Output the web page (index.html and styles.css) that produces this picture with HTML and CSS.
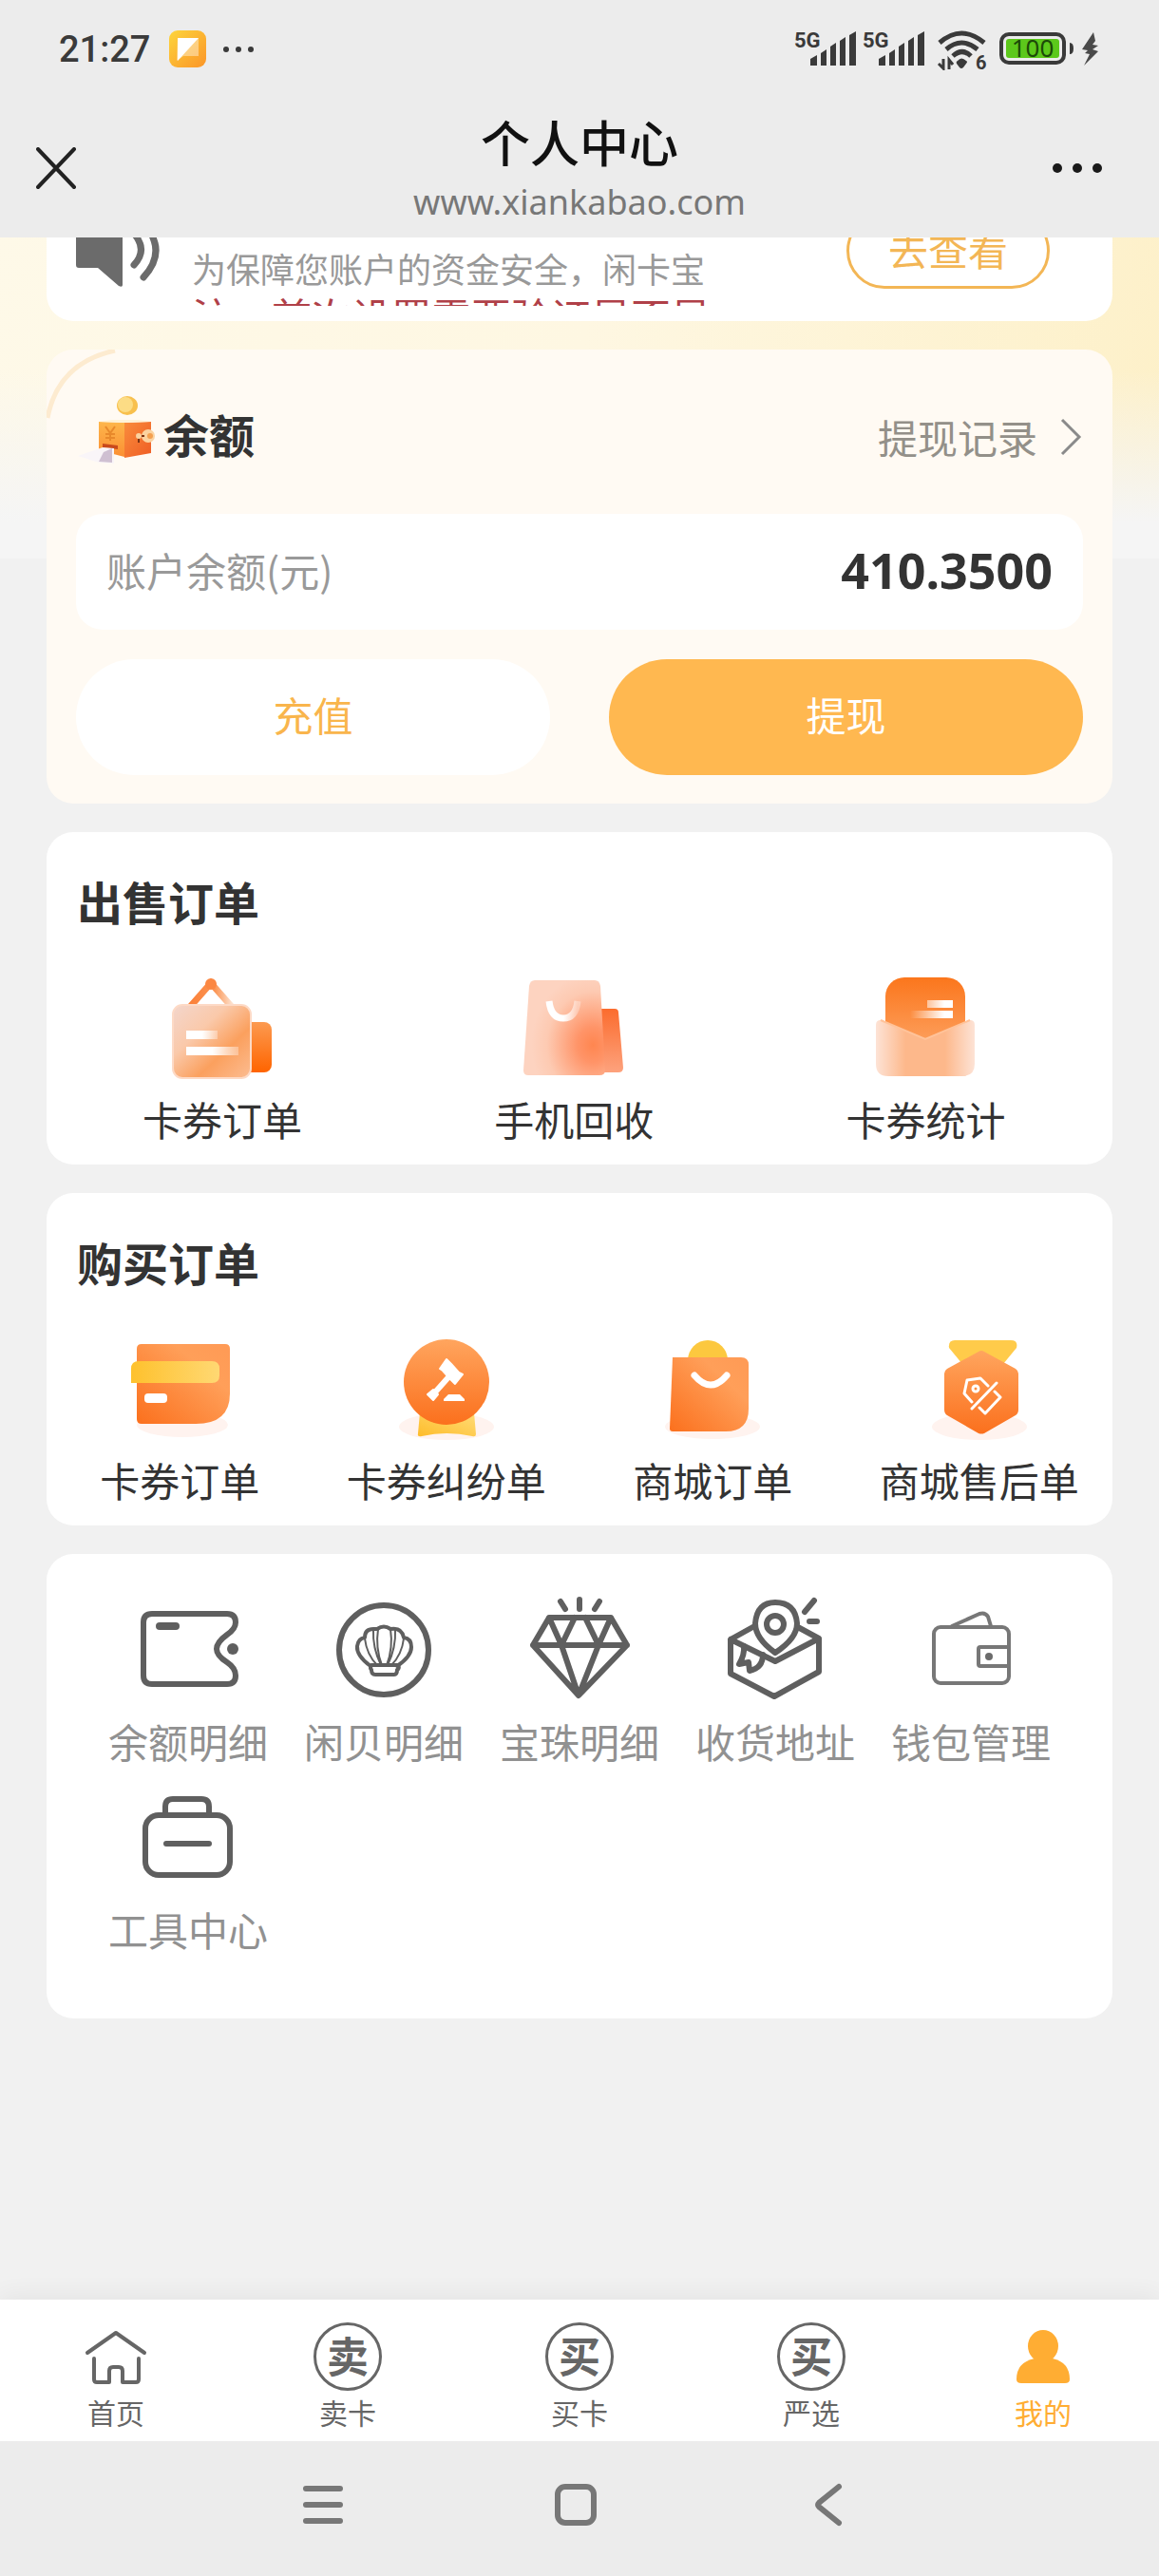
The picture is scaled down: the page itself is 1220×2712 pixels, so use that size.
FILE: index.html
```html
<!DOCTYPE html>
<html lang="zh-CN">
<head>
<meta charset="utf-8">
<meta name="viewport" content="width=device-width, initial-scale=1">
<title>个人中心</title>
<link rel="stylesheet" href="styles.css">
</head>
<body>
<header class="top">
  <div class="status">
    <div class="status-side">
      <span class="clock">21:27</span>
      <svg class="app-badge" width="40" height="40" viewBox="0 0 40 40">
        <defs><linearGradient id="badge" x1="0" y1="0" x2="1" y2="1"><stop offset="0" stop-color="#fdd53c"/><stop offset="1" stop-color="#fb9528"/></linearGradient></defs>
        <rect width="39" height="39" rx="9" fill="url(#badge)"/>
        <path d="M9 8h22v19H15l-7 5z" fill="#fff" opacity=".4"/>
        <path d="M9 8h22L9 32z" fill="#fff"/>
      </svg>
      <svg width="34" height="10" viewBox="0 0 34 10" fill="#3a3a3a"><circle cx="4" cy="5" r="3"/><circle cx="17" cy="5" r="3"/><circle cx="30" cy="5" r="3"/></svg>
    </div>
    <div class="status-side">
      <svg width="324" height="44" viewBox="0 0 324 44">
        <g fill="#3a3a3a">
          <text class="net" x="0" y="20">5G</text>
          <text class="net" x="72" y="20">5G</text>
          <path d="M17 32l7-4v11h-7zM28 26l6-4v17h-6zM38 19l6-4v24h-6zM48 13l6-4v30h-6zM58 7l7-4v36h-7z"/>
          <path d="M89 32l7-4v11h-7zM100 26l6-4v17h-6zM110 19l6-4v24h-6zM120 13l6-4v30h-6zM130 7l7-4v36h-7z"/>
          <path d="M172 34q4-5 9 0 2 1 0 3l-3 4q-2 2-4 0l-3-4q-1-2 1-3z"/>
          <text class="wifi-gen" x="191" y="43">6</text>
        </g>
        <g fill="none" stroke="#3a3a3a" stroke-width="5">
          <path d="M153 15q23-20 47 0"/><path d="M160 22q16-14 33 0"/><path d="M167 29q10-9 19 0"/>
          <path d="M157 32v10l-5-5M163 43V33l4 5" stroke-width="3"/>
          <rect x="218" y="6" width="66" height="30" rx="8" stroke-width="4"/>
        </g>
        <rect x="223" y="11" width="56" height="20" rx="3" fill="#5cc81b"/>
        <path d="M290 15q4 0 4 6t-4 6z" fill="#3a3a3a"/>
        <text class="level" x="251" y="30" text-anchor="middle">100</text>
        <path d="M315 4l-12 18 6 1-3 3 5 1-6 12 15-15-6-2 6-4-6-1 3-4z" fill="#4a4a4a"/>
      </svg>
    </div>
  </div>
  <div class="titlebar">
    <button class="icon-btn" aria-label="关闭"><svg width="44" height="44" viewBox="0 0 44 44"><path d="M2 2l38 40M40 2L2 42" stroke="#222" stroke-width="4" stroke-linecap="round"/></svg></button>
    <div class="titles">
      <h1>个人中心</h1>
      <p>www.xiankabao.com</p>
    </div>
    <button class="icon-btn end" aria-label="更多"><svg width="56" height="44" viewBox="0 0 56 44" fill="#1a1a1a"><circle cx="7" cy="22" r="5"/><circle cx="28" cy="22" r="5"/><circle cx="49" cy="22" r="5"/></svg></button>
  </div>
</header>

<main class="page">
  <section class="card notice">
    <svg width="90" height="80" viewBox="0 0 90 80">
      <path d="M0 24q0-3 3-3h20L46 2q3-2 3 2v72q0 3-4 1L23 58H3q-3 0-3-3z" fill="#6b6b6b"/>
      <g fill="none" stroke="#6b6b6b" stroke-width="7" stroke-linecap="round"><path d="M61 22q15 17 0 33"/><path d="M71 11q26 29 0 57"/></g>
    </svg>
    <div class="notice-text"><p>为保障您账户的资金安全，闲卡宝</p><p class="warn">注：首次设置需要验证是否是</p></div>
    <button class="check">去查看</button>
  </section>

  <section class="card balance">
    <svg class="corner" width="84" height="84" viewBox="0 0 84 84"><path d="M1 72Q12 14 72 1" fill="none" stroke="#fdebd0" stroke-width="5"/></svg>
    <div class="balance-head">
      <svg width="90" height="100" viewBox="0 0 90 100">
        <defs>
          <linearGradient id="boxl" x1="0" y1="0" x2="0" y2="1"><stop offset="0" stop-color="#fdb64b"/><stop offset="1" stop-color="#fb8f33"/></linearGradient>
          <linearGradient id="boxr" x1="0" y1="0" x2="1" y2="1"><stop offset="0" stop-color="#f98c3c"/><stop offset="1" stop-color="#ef5d24"/></linearGradient>
        </defs>
        <ellipse cx="54" cy="17" rx="11" ry="10" fill="#f8c04e"/><ellipse cx="52" cy="16" rx="8" ry="8" fill="#fcdc85"/>
        <path d="M24 34l27 1v36l-27-7z" fill="url(#boxl)"/>
        <path d="M51 35l28-1v33l-28 5z" fill="url(#boxr)"/>
        <path d="M24 34l27 1 28-1-14-2H38z" fill="#fff3d8"/>
        <path d="M31 39l5 7 5-7M31 47h10M31 51h10M36 46v8" fill="none" stroke="#e8892b" stroke-width="2"/>
        <path d="M28 57l16 2v4l-16-2z" fill="#c94a1c"/>
        <path d="M2 70l26-9 12 1v16l-16-1z" fill="#f9f5f8"/><path d="M29 66l9-4v15l-14-1z" fill="#cfc0d2"/>
        <circle cx="76" cy="49" r="7" fill="#fbd3a0"/><circle cx="78" cy="49" r="3" fill="#f4a04f"/><path d="M63 49h9M66 49v7" stroke="#7d3413" stroke-width="2"/><circle cx="66" cy="49" r="3" fill="#fbd3a0"/>
      </svg>
      <h2>余额</h2>
      <a class="records" href="#records">提现记录<svg width="24" height="40" viewBox="0 0 24 40"><path d="M2 2l18 18L2 38" fill="none" stroke="#8a8a8a" stroke-width="3"/></svg></a>
    </div>
    <div class="amount"><span>账户余额(元)</span><strong>410.3500</strong></div>
    <div class="actions"><button class="pill">充值</button><button class="pill primary">提现</button></div>
  </section>

  <section class="card orders">
    <h2>出售订单</h2>
    <div class="row three">
      <a href="#sell-cards">
        <svg class="ico" viewBox="0 0 120 120">
          <defs>
            <linearGradient id="o1" x1="0" y1="0" x2="0" y2="1"><stop offset="0" stop-color="#fc9a50"/><stop offset="1" stop-color="#ff6400"/></linearGradient>
            <linearGradient id="o2" x1="0" y1="0" x2="1" y2="1"><stop offset="0" stop-color="#f3d6cc"/><stop offset=".35" stop-color="#fac9aa"/><stop offset=".65" stop-color="#fba05e"/><stop offset="1" stop-color="#fcbd92"/></linearGradient>
            <linearGradient id="fade"><stop offset="0" stop-color="#fff"/><stop offset=".5" stop-color="#fff"/><stop offset="1" stop-color="#fff" stop-opacity=".3"/></linearGradient>
            <linearGradient id="hook"><stop offset="0" stop-color="#fb8038"/><stop offset=".6" stop-color="#fb9554"/><stop offset="1" stop-color="#fde0cc"/></linearGradient>
          </defs>
          <path d="M26 38L48 13 70 38" fill="none" stroke="url(#hook)" stroke-width="7"/><circle cx="48" cy="14" r="6" fill="#fb8742"/>
          <rect x="72" y="54" width="40" height="53" rx="8" fill="url(#o1)"/>
          <rect x="8" y="36" width="82" height="77" rx="10" fill="url(#o2)" stroke="#fddac6" stroke-width="2"/>
          <path d="M22 63h33v9H22z" fill="url(#fade)"/><path d="M22 80h55v9H22z" fill="url(#fade)"/>
        </svg>
        <span>卡券订单</span>
      </a>
      <a href="#recycle">
        <svg class="ico" viewBox="0 0 120 120">
          <defs>
            <linearGradient id="p1" x1="0" y1="0" x2="0" y2="1"><stop offset="0" stop-color="#fb6c2e"/><stop offset="1" stop-color="#fda27d"/></linearGradient>
            <radialGradient id="p2" cx=".85" cy=".68" r=".75"><stop offset="0" stop-color="#ff8650"/><stop offset=".25" stop-color="#ff9468"/><stop offset=".75" stop-color="#fdcab2"/><stop offset="1" stop-color="#fdd3c0"/></radialGradient>
          </defs>
          <path d="M84 40h19q4 0 4 4l5 58q0 5-5 5H84z" fill="url(#p1)"/>
          <path d="M19 10h63q5 0 6 6l5 89q0 5-6 5H12q-5 0-5-5l6-89q1-6 6-6z" fill="url(#p2)"/>
          <path d="M34 32q2 18 15 18t15-18" fill="none" stroke="url(#fade)" stroke-width="7"/>
        </svg>
        <span>手机回收</span>
      </a>
      <a href="#stats">
        <svg class="ico" viewBox="0 0 120 120">
          <defs>
            <linearGradient id="q1" x1="0" y1="0" x2="0" y2="1"><stop offset="0" stop-color="#fb761c"/><stop offset="1" stop-color="#fda566"/></linearGradient>
            <linearGradient id="q2"><stop offset="0" stop-color="#fde3d6"/><stop offset=".3" stop-color="#fdb88b"/><stop offset=".7" stop-color="#fdb88b"/><stop offset="1" stop-color="#fde3d6"/></linearGradient>
            <linearGradient id="q3"><stop offset="0" stop-color="#fff" stop-opacity="0"/><stop offset=".8" stop-color="#fff"/></linearGradient>
          </defs>
          <rect x="17" y="7" width="84" height="80" rx="20" fill="url(#q1)"/>
          <path d="M61 31h27v8H61zM43 42h45v8H43z" fill="url(#q3)"/>
          <path d="M7 57q0-5 5-5l47 20 47-20q5 0 5 5v41q0 13-13 13H20Q7 111 7 98z" fill="url(#q2)"/>
          <path d="M12 52l47 20 47-20" fill="none" stroke="#ffc39a" stroke-width="2"/>
        </svg>
        <span>卡券统计</span>
      </a>
    </div>
  </section>

  <section class="card orders">
    <h2>购买订单</h2>
    <div class="row four">
      <a href="#buy-cards">
        <svg class="ico" viewBox="0 0 120 120">
          <defs>
            <linearGradient id="r1" x1="0" y1="1" x2="1" y2="0"><stop offset="0" stop-color="#fb701d"/><stop offset=".7" stop-color="#ff9f59"/><stop offset="1" stop-color="#ff9a55"/></linearGradient>
            <linearGradient id="r2"><stop offset="0" stop-color="#fec12d"/><stop offset="1" stop-color="#ffd873"/></linearGradient>
          </defs>
          <ellipse cx="63" cy="98" rx="48" ry="13" fill="#fff3ef"/>
          <path d="M20 13h88q5 0 5 5v47q0 32-36 32H20q-5 0-5-5V18q0-5 5-5z" fill="url(#r1)"/>
          <path d="M17 31h77q8 0 8 8v7q0 8-8 8H9V39q0-8 8-8z" fill="url(#r2)"/>
          <rect x="23" y="65" width="24" height="10" rx="4" fill="#fff"/>
        </svg>
        <span>卡券订单</span>
      </a>
      <a href="#disputes">
        <svg class="ico" viewBox="0 0 120 120">
          <defs>
            <linearGradient id="s1" x1="0" y1="0" x2="0" y2="1"><stop offset="0" stop-color="#ffa55e"/><stop offset="1" stop-color="#fb701d"/></linearGradient>
            <linearGradient id="s2" x1="0" y1="1" x2="1" y2="0"><stop offset="0" stop-color="#febc2a"/><stop offset="1" stop-color="#ffdc78"/></linearGradient>
          </defs>
          <ellipse cx="60" cy="100" rx="50" ry="14" fill="#fff3ef"/>
          <path d="M32 85h57l2 23q0 3-4 2-27-6-53 0-5 1-4-3z" fill="url(#s2)"/>
          <circle cx="60" cy="53" r="45" fill="url(#s1)"/>
          <g fill="#fff" stroke="#fff" stroke-linejoin="round">
            <path d="M62 48L46 66" stroke-width="6"/>
            <path d="M60 29l5 5 8 9 4 2-8 10-5-5-8-9-3-2z" stroke-width="2"/>
            <path d="M46 61l5 5-5 6-6-6z" stroke-width="2"/>
            <path d="M62 66h12l5 5v2H57v-2z" stroke="none"/>
          </g>
        </svg>
        <span>卡券纠纷单</span>
      </a>
      <a href="#mall">
        <svg class="ico" viewBox="0 0 120 120">
          <ellipse cx="60" cy="100" rx="50" ry="13" fill="#fff3ef"/>
          <circle cx="55" cy="30" r="21" fill="#fcc83f"/>
          <path d="M18 27h72q8 0 8 8v46q0 24-24 24H18q-3 0-3-3z" fill="url(#r1)"/>
          <path d="M41 46q17 20 34 0" fill="none" stroke="#fff" stroke-width="7" stroke-linecap="round"/>
        </svg>
        <span>商城订单</span>
      </a>
      <a href="#after-sale">
        <svg class="ico" viewBox="0 0 120 120">
          <ellipse cx="60" cy="100" rx="50" ry="14" fill="#fff3ef"/>
          <path d="M34 9h59q8 0 6 8L85 34 62 48 42 34 28 17q-1-8 6-8z" fill="#ffcb4a"/>
          <path d="M59 21q3-2 6 0l33 18q3 2 3 5v38q0 4-3 6l-33 19q-3 1-6 0L26 88q-3-2-3-6V44q0-3 3-5z" fill="url(#s1)"/>
          <g fill="none" stroke="#fff" stroke-width="3" stroke-linecap="round" stroke-linejoin="round"><path d="M69 57l-8-8-14 2-3 14 8 9M52 81l26-27M76 63l6 6-16 17-6-6"/><circle cx="56" cy="60" r="3"/></g>
        </svg>
        <span>商城售后单</span>
      </a>
    </div>
  </section>

  <section class="card tools">
    <a href="#balance-log">
      <svg class="ico line" viewBox="0 0 120 120"><path d="M101 44Q110 38 110 31 110 22 101 22H22q-9 0-9 9v56q0 9 9 9h79q9 0 9-9 0-8-9-14Q90 66 90 59t11-15z"/><circle cx="107" cy="59" r="6" fill="#5f5f5f" stroke="none"/><path d="M30 35h17" stroke-width="8"/></svg>
      <span>余额明细</span>
    </a>
    <a href="#shell-log">
      <svg class="ico line" viewBox="0 0 120 120"><circle cx="60" cy="60" r="47"/><path d="M46 77Q31 66 32 56q1-8 8-9 0-9 9-9 3 0 4 0 7-5 14 0 12-2 14 9 8 1 8 10 0 10-15 20" stroke-width="4"/><path d="M47 76h28q2 3-1 5 0 5-3 5H51q-4 0-4-5-2-2 0-5z" stroke-width="4"/><path d="M40 48q2 17 13 28M49 38q-1 20 8 38M54 38q-3 20 4 38M67 38q3 20-4 38M72 38q1 20-8 38M81 48q-2 17-13 28" stroke-width="2"/></svg>
      <span>闲贝明细</span>
    </a>
    <a href="#pearl-log">
      <svg class="ico line" viewBox="0 0 120 120"><path d="M28 26h65l17 29-51 53-48-53zM11 55h99M28 26l13 29 18 53 21-53 13-29M41 55l14-29M80 55L66 26M60 7v10M40 9l5 8M81 9l-5 8"/></svg>
      <span>宝珠明细</span>
    </a>
    <a href="#address">
      <svg class="ico line" viewBox="0 0 120 120"><path d="M40 34L13 49v36l46 24 47-26V48L82 35M13 49l47 23 46-24"/><path d="M60 63Q39 48 39 32 41 10 60 10q21 0 23 22 0 16-23 31z" fill="#fff"/><circle cx="60" cy="33" r="9"/><path d="M91 20l10-12M96 30h8M27 56q1 9-5 19l10-2 1 9q14-3 14-17"/></svg>
      <span>收货地址</span>
    </a>
    <a href="#wallet">
      <svg class="ico line thin" viewBox="0 0 120 120"><rect x="21" y="36" width="79" height="59" rx="7"/><path d="M40 35l29-13q6-2 9 3l3 10M99 57H70q-2 0-2 2v16q0 2 2 2h29"/><circle cx="79" cy="67" r="4" fill="#6b6b6b" stroke="none"/></svg>
      <span>钱包管理</span>
    </a>
    <a href="#toolbox">
      <svg class="ico line" viewBox="0 0 120 120"><rect x="15" y="36" width="89" height="63" rx="14"/><path d="M36 36V27q0-8 8-8h30q8 0 8 8v9M37 66h45"/></svg>
      <span>工具中心</span>
    </a>
  </section>
</main>

<nav class="tabs">
  <a href="#home"><svg class="tab-ico" viewBox="0 0 72 72" fill="none" stroke="#666" stroke-width="4" stroke-linecap="round" stroke-linejoin="round"><path d="M6 32L36 11 66 32M13 38v22q0 3 3 3h13V51q0-4 4-4h6q4 0 4 4v12h14q3 0 3-3V38"/></svg><span>首页</span></a>
  <a href="#sell"><b class="tab-ico ring">卖</b><span>卖卡</span></a>
  <a href="#buy"><b class="tab-ico ring">买</b><span>买卡</span></a>
  <a href="#select"><b class="tab-ico ring">买</b><span>严选</span></a>
  <a class="active" href="#me"><svg class="tab-ico" viewBox="0 0 72 72" fill="#ffad33"><ellipse cx="36" cy="25" rx="16" ry="17"/><path d="M27 38q-19 4-19 22 0 4 5 4h46q5 0 5-4 0-18-18-22z"/></svg><span>我的</span></a>
</nav>
<footer class="sysnav">
  <button aria-label="最近任务"><svg width="44" height="44" viewBox="0 0 44 44"><path d="M4 5h36M4 22h36M4 39h36"/></svg></button>
  <button aria-label="主屏幕"><svg width="48" height="48" viewBox="0 0 48 48"><rect x="5" y="5" width="38" height="38" rx="8"/></svg></button>
  <button aria-label="返回"><svg width="44" height="48" viewBox="0 0 44 48"><path d="M33 5L12 22q-2 2 0 4l21 17"/></svg></button>
</footer>
</body>
</html>
```
FILE: styles.css
```css
* { box-sizing: border-box; margin: 0; padding: 0; }

body {
  display: flex;
  flex-direction: column;
  min-height: 100vh;
  background: #f1f1f1;
  color: #333;
  font-family: "Noto Sans CJK SC", sans-serif;
  font-size: 42px;
  line-height: 60px;
}

a { color: inherit; text-decoration: none; }
button { border: 0; background: none; font: inherit; color: inherit; cursor: pointer; }
svg { display: block; flex: none; }

/* Phone status bar and page title */
.top { position: relative; z-index: 2; background: #ececec; }
.status { display: flex; justify-content: space-between; align-items: center; height: 104px; padding: 0 60px 0 62px; }
.status-side { display: flex; align-items: center; }
.clock { font: 500 38px/60px Roboto, sans-serif; color: #3a3a3a; }
.app-badge { margin: 0 16px 0 20px; }
.net { font: 700 22px Roboto, sans-serif; }
.wifi-gen { font: 700 20px Roboto, sans-serif; }
.level { font: 400 26px "Noto Sans", sans-serif; fill: #1c4a08; }

.titlebar { display: grid; grid-template-columns: 1fr auto 1fr; align-items: center; height: 146px; padding: 0 38px; }
.icon-btn { width: 56px; }
.icon-btn.end { justify-self: end; margin-right: 20px; }
.titles { display: grid; gap: 14px; padding-bottom: 2px; text-align: center; }
.titles h1 { font-size: 52px; font-weight: 500; color: #111; line-height: 60px; }
.titles p { font: 400 36px/40px "Noto Sans", sans-serif; color: #777; }

/* Scrolled content; its first card runs under the title bar */
.page {
  flex: 1;
  display: flex;
  flex-direction: column;
  gap: 30px;
  margin-top: -70px;
  padding: 0 49px 60px;
  background:
    linear-gradient(to bottom, rgba(245, 245, 245, 0) 210px, #f5f5f5 370px) top / 100% 408px no-repeat,
    linear-gradient(100deg, #fef9e8 0%, #fef7e2 50%, #fdf0c8 100%) top / 100% 408px no-repeat;
}
.card { background: #fff; border-radius: 28px; }

.notice { display: flex; align-items: flex-start; padding: 44px 66px 0 31px; height: 158px; }
.notice-text { margin-left: 32px; padding-top: 38px; height: 98px; overflow: hidden; font-size: 36px; line-height: 40px; color: #999; white-space: nowrap; }
.warn { font-size: 42px; line-height: 60px; color: #b04048; }
.check { width: 214px; height: 80px; margin-left: auto; padding-bottom: 4px; border: 3px solid #f3b655; border-radius: 40px; color: #f3b655; line-height: 70px; }

.balance { position: relative; padding: 42px 31px 30px; background: #fffaf3; }
.corner { position: absolute; left: 0; top: 0; }
.balance-head { display: flex; align-items: center; margin-bottom: 31px; }
h2 { font-size: 48px; font-weight: 700; line-height: 60px; }
.balance-head h2 { margin-left: 2px; padding-bottom: 8px; }
.records { display: flex; align-items: center; gap: 24px; margin-left: auto; color: #939089; }
.amount { display: flex; justify-content: space-between; align-items: center; height: 122px; padding: 0 32px 4px; background: #fff; border-radius: 28px; color: #999; }
.amount strong { font: 700 52px/60px "Noto Sans", sans-serif; color: #333; }
.actions { display: grid; grid-template-columns: 1fr 1fr; gap: 62px; margin-top: 31px; }
.pill { height: 122px; padding-bottom: 6px; border-radius: 61px; background: #fff; color: #f9b54c; }
.pill.primary { background: #ffb850; color: #fff; }

.orders { padding: 42px 0 18px; }
.orders h2 { margin: 0 0 44px 32px; }
.row { display: grid; }
.three { grid-template-columns: repeat(3, 33%); }
.four { grid-template-columns: repeat(4, 1fr); }
.row a, .tools a { display: grid; justify-items: center; gap: 6px; white-space: nowrap; }
.ico { width: 120px; height: 120px; }

.tools { display: grid; grid-template-columns: repeat(5, 1fr); gap: 12px 0; padding: 41px 46px 64px; color: #919191; }
.line { fill: none; stroke: #5f5f5f; stroke-width: 6px; stroke-linecap: round; stroke-linejoin: round; }
.line.thin { stroke: #777; stroke-width: 4px; }

/* App tab bar and system navigation */
.tabs { display: grid; grid-template-columns: repeat(5, 1fr); padding: 24px 0 11px; background: #fff; color: #666; box-shadow: 0 -4px 24px rgba(0, 0, 0, .06); }
.tabs a { display: grid; justify-items: center; gap: 2px; font-size: 30px; line-height: 40px; }
.tabs .active { color: #ffad33; }
.tab-ico { width: 72px; height: 72px; }
.ring { display: flex; align-items: center; justify-content: center; padding-bottom: 4px; border: 3px solid #666; border-radius: 50%; font-size: 44px; font-weight: 700; }

.sysnav { display: flex; justify-content: center; gap: 202px; height: 142px; padding: 42px 8px 0 0; background: #ececec; }
.sysnav button { display: flex; align-items: center; justify-content: center; width: 64px; height: 50px; }
.sysnav svg { fill: none; stroke: #777; stroke-width: 6px; stroke-linecap: round; }
```
